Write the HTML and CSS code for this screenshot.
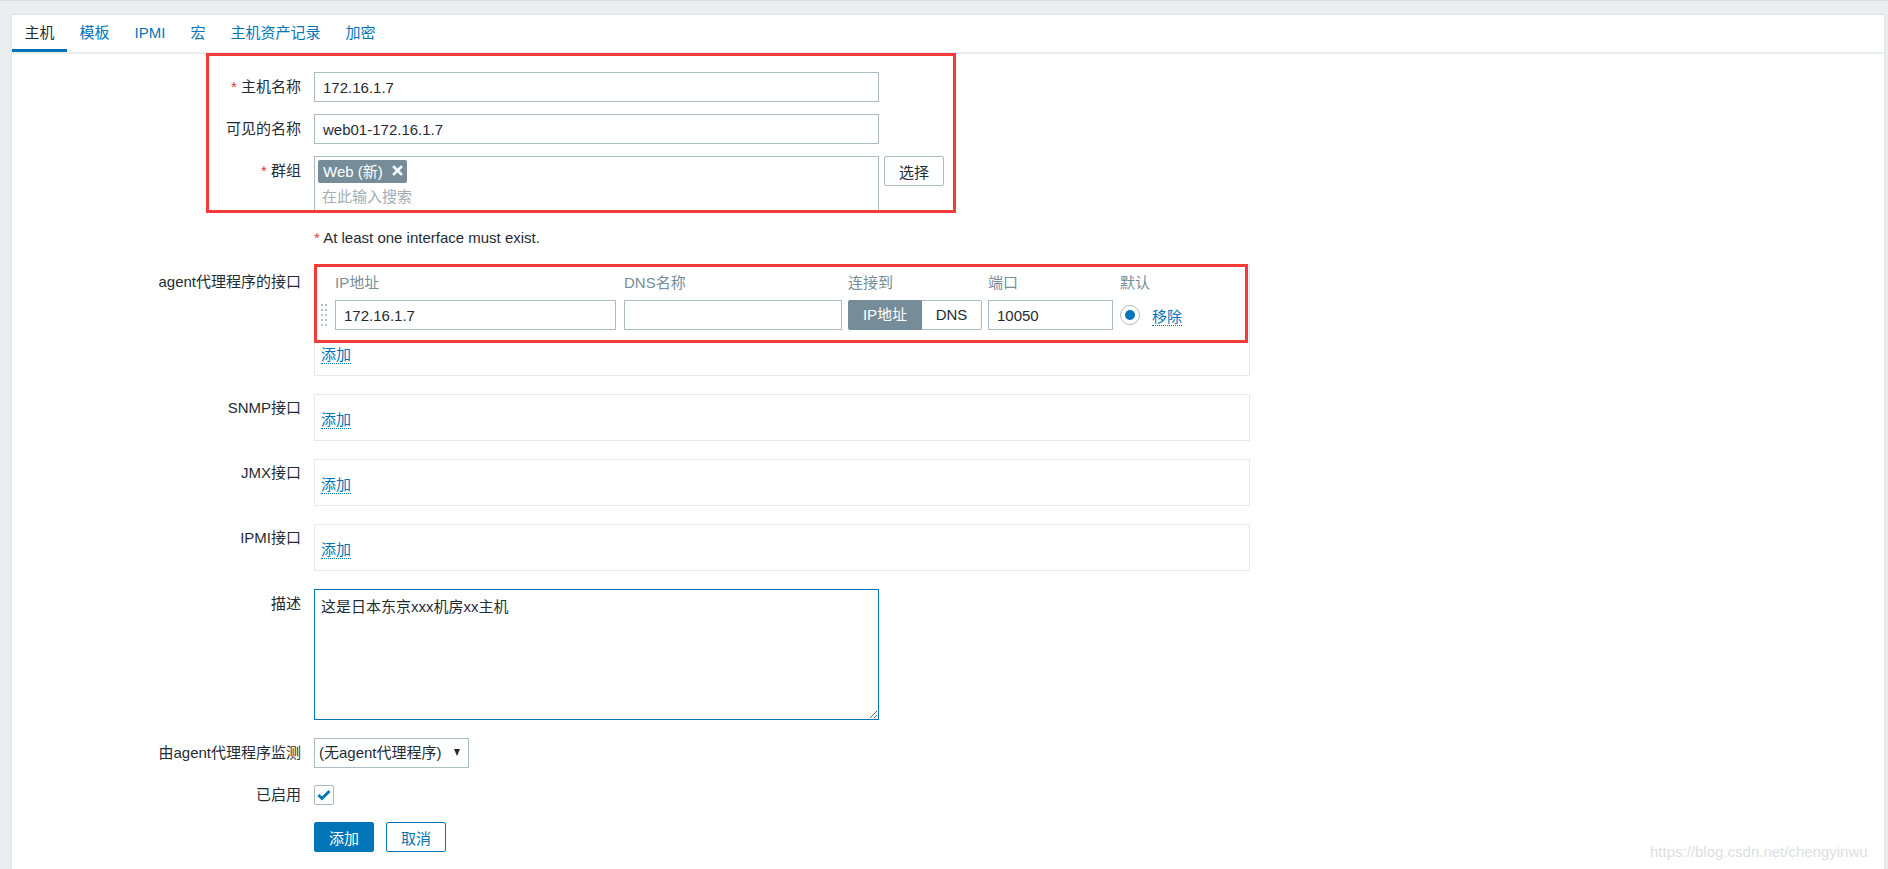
FILE: index.html
```html
<!DOCTYPE html>
<html lang="zh-CN">
<head>
<meta charset="utf-8">
<title>主机</title>
<link rel="stylesheet" href="styles.css">
</head>
<body>
<div class="page">
  <div class="panel">
    <ul class="tabs">
      <li class="tab active"><a>主机</a></li>
      <li class="tab"><a>模板</a></li>
      <li class="tab"><a>IPMI</a></li>
      <li class="tab"><a>宏</a></li>
      <li class="tab"><a>主机资产记录</a></li>
      <li class="tab"><a>加密</a></li>
    </ul>

    <div class="form">
      <div class="row">
        <div class="lbl"><span class="req">*</span> 主机名称</div>
        <div class="fld"><input class="txt w565" type="text" value="172.16.1.7"></div>
      </div>

      <div class="row">
        <div class="lbl">可见的名称</div>
        <div class="fld"><input class="txt w565" type="text" value="web01-172.16.1.7"></div>
      </div>

      <div class="row">
        <div class="lbl"><span class="req">*</span> 群组</div>
        <div class="fld fld-inline">
          <div class="ms">
            <div class="ms-tags">
              <span class="tag">Web (新)
                <svg class="tag-x" width="11" height="11" viewBox="0 0 11 11"><path d="M2 2 L9 9 M9 2 L2 9" stroke="#fff" stroke-width="2.6" stroke-linecap="square"/></svg>
              </span>
            </div>
            <div class="ms-ph">在此输入搜索</div>
          </div>
          <button class="btn-alt" type="button">选择</button>
        </div>
      </div>

      <div class="row">
        <div class="lbl"></div>
        <div class="fld note"><span class="req">*</span> At least one interface must exist.</div>
      </div>

      <div class="row extra">
        <div class="lbl lbl-iface">agent代理程序的接口</div>
        <div class="fld">
          <div class="iface">
            <div class="iface-grid">
              <div class="ih"></div>
              <div class="ih">IP地址</div>
              <div class="ih">DNS名称</div>
              <div class="ih">连接到</div>
              <div class="ih">端口</div>
              <div class="ih">默认</div>

              <div class="ic">
                <svg class="handle" width="6" height="22" viewBox="0 0 6 22">
                  <g fill="#b4c0c6">
                    <rect x="0" y="0" width="2" height="2"/><rect x="4" y="0" width="2" height="2"/>
                    <rect x="0" y="5" width="2" height="2"/><rect x="4" y="5" width="2" height="2"/>
                    <rect x="0" y="10" width="2" height="2"/><rect x="4" y="10" width="2" height="2"/>
                    <rect x="0" y="15" width="2" height="2"/><rect x="4" y="15" width="2" height="2"/>
                    <rect x="0" y="20" width="2" height="2"/><rect x="4" y="20" width="2" height="2"/>
                  </g>
                </svg>
              </div>
              <div class="ic"><input class="txt w281" type="text" value="172.16.1.7"></div>
              <div class="ic"><input class="txt w218" type="text" value=""></div>
              <div class="ic">
                <div class="tog"><span class="tog-on">IP地址</span><span class="tog-off">DNS</span></div>
              </div>
              <div class="ic"><input class="txt w125" type="text" value="10050"></div>
              <div class="ic">
                <span class="radio"><span class="radio-dot"></span></span>
                <a class="lnk rm">移除</a>
              </div>
            </div>
            <div class="iface-add"><a class="lnk">添加</a></div>
          </div>
        </div>
      </div>

      <div class="row extra">
        <div class="lbl lbl-box">SNMP接口</div>
        <div class="fld"><div class="ibox"><a class="lnk">添加</a></div></div>
      </div>

      <div class="row extra">
        <div class="lbl lbl-box">JMX接口</div>
        <div class="fld"><div class="ibox"><a class="lnk">添加</a></div></div>
      </div>

      <div class="row extra">
        <div class="lbl lbl-box">IPMI接口</div>
        <div class="fld"><div class="ibox"><a class="lnk">添加</a></div></div>
      </div>

      <div class="row extra">
        <div class="lbl">描述</div>
        <div class="fld"><textarea class="desc">这是日本东京xxx机房xx主机</textarea></div>
      </div>

      <div class="row">
        <div class="lbl">由agent代理程序监测</div>
        <div class="fld">
          <div class="sel"><span>(无agent代理程序)</span><span class="caret"></span></div>
        </div>
      </div>

      <div class="row">
        <div class="lbl">已启用</div>
        <div class="fld fld-center">
          <span class="chk">
            <svg width="18" height="18" viewBox="0 0 18 18"><path d="M3.5 9 L7 12.5 L14.5 5" fill="none" stroke="#0275b8" stroke-width="3"/></svg>
          </span>
        </div>
      </div>

      <div class="row">
        <div class="lbl"></div>
        <div class="fld fld-inline btns">
          <button class="btn btn-primary" type="button">添加</button>
          <button class="btn btn-secondary" type="button">取消</button>
        </div>
      </div>
    </div>

    <div class="mark mark1"></div>
    <div class="mark mark2"></div>
    <div class="watermark">https://blog.csdn.net/chengyinwu</div>
  </div>
</div>
</body>
</html>
```

FILE: styles.css
```css
html, body {
  margin: 0;
  padding: 0;
}

body {
  height: 869px;
  overflow: hidden;
  background: #ebeef0;
  border-top: 1px solid #d9dee1;
  box-sizing: border-box;
  font-family: "Liberation Sans", Arial, "Noto Sans CJK SC", sans-serif;
  font-size: 15px;
  line-height: 18px;
  color: #1f2c33;
}

.page {
  padding: 13px 3px 0 11px;
}

.panel {
  position: relative;
  background: #fff;
  border: 1px solid #dfe4e7;
  border-bottom: none;
  height: 854px;
  overflow: hidden;
}

/* tabs */
.tabs {
  display: flex;
  list-style: none;
  margin: 0;
  padding: 0;
  border-bottom: 2px solid #ebeef0;
}

.tab a {
  display: block;
  padding: 9px 12.5px 7px;
  line-height: 18px;
  color: #0275b8;
  border-bottom: 3px solid transparent;
  cursor: pointer;
}

.tab.active a {
  color: #1f2c33;
  border-bottom-color: #0275b8;
}

/* form */
.form {
  display: flex;
  flex-direction: column;
  gap: 12px;
  padding-top: 18px;
}

.row {
  display: grid;
  grid-template-columns: 289px 1fr;
  column-gap: 13px;
}

.row.extra {
  margin-bottom: 6px;
}

.lbl {
  text-align: right;
  padding-top: 6px;
  line-height: 18px;
  white-space: nowrap;
}

.lbl-iface {
  padding-top: 9px;
}

.lbl-box {
  padding-top: 5px;
}

.req {
  color: #e33734;
}

.fld-inline {
  display: flex;
  align-items: flex-start;
  gap: 5px;
}

.fld-center {
  display: flex;
  align-items: center;
  height: 30px;
}

.note {
  line-height: 29px;
  height: 29px;
}

.txt {
  display: block;
  height: 30px;
  box-sizing: border-box;
  border: 1px solid #acbbc2;
  padding: 0 8px;
  margin: 0;
  font-family: "Liberation Sans", Arial, "Noto Sans CJK SC", sans-serif;
  font-size: 15px;
  color: #1f2c33;
  background: #fff;
  border-radius: 0;
  outline: none;
}

.w565 { width: 565px; }
.w281 { width: 281px; }
.w218 { width: 218px; }
.w125 { width: 125px; }

/* multiselect */
.ms {
  width: 565px;
  height: 55px;
  box-sizing: border-box;
  border: 1px solid #acbbc2;
  padding: 3px;
}

.ms-tags {
  display: flex;
}

.tag {
  display: inline-flex;
  align-items: center;
  gap: 9px;
  height: 23px;
  line-height: 23px;
  padding: 0 4px 0 5px;
  background: #768d99;
  color: #fff;
  border-radius: 2px;
}

.tag-x {
  display: block;
  margin-top: -2px;
}

.ms-ph {
  color: #a3adb3;
  padding-left: 4px;
  margin-top: 5px;
  line-height: 18px;
}

.btn-alt {
  width: 60px;
  height: 30px;
  border: 1px solid #acbbc2;
  border-radius: 2px;
  background: #fff;
  color: #1f2c33;
  font-family: "Liberation Sans", Arial, "Noto Sans CJK SC", sans-serif;
  font-size: 15px;
  padding: 0;
}

/* interfaces */
.iface {
  width: 936px;
  box-sizing: border-box;
  border: 1px solid #e6e9eb;
}

.iface-grid {
  display: grid;
  grid-template-columns: 20px 289px 224px 140px 132px 1fr;
}

.ih {
  color: #768d99;
  padding: 9px 0 8px;
  line-height: 18px;
}

.ic {
  height: 30px;
  display: flex;
  align-items: center;
}

.handle {
  display: block;
  margin-left: 6px;
}

.tog {
  display: flex;
  width: 134px;
  height: 30px;
  box-sizing: border-box;
}

.tog-on,
.tog-off {
  display: flex;
  align-items: center;
  justify-content: center;
  box-sizing: border-box;
  height: 30px;
}

.tog-on {
  width: 74px;
  background: #768d99;
  color: #fff;
  border: 1px solid #768d99;
  border-radius: 2px 0 0 2px;
}

.tog-off {
  width: 60px;
  background: #fff;
  color: #1f2c33;
  border: 1px solid #acbbc2;
  border-left: none;
  border-radius: 0 2px 2px 0;
}

.radio {
  display: flex;
  align-items: center;
  justify-content: center;
  width: 20px;
  height: 20px;
  box-sizing: border-box;
  border: 1px solid #acbbc2;
  border-radius: 50%;
}

.radio-dot {
  width: 10px;
  height: 10px;
  border-radius: 50%;
  background: #0275b8;
}

.lnk {
  display: inline-block;
  color: #0275b8;
  line-height: 17px;
  border-bottom: 1px dotted #0275b8;
  cursor: pointer;
}

.rm {
  margin-left: 12px;
  margin-top: 3px;
}

.iface-add {
  padding: 16px 6px 11px;
  line-height: 18px;
}

.ibox {
  width: 936px;
  box-sizing: border-box;
  border: 1px solid #e6e9eb;
  padding: 16px 6px 11px;
  line-height: 18px;
}

/* description */
.desc {
  display: block;
  width: 565px;
  height: 131px;
  box-sizing: border-box;
  border: 1px solid #0275b8;
  padding: 8px 6px;
  margin: 0;
  font-family: "Liberation Sans", Arial, "Noto Sans CJK SC", sans-serif;
  font-size: 15px;
  line-height: 18px;
  color: #1f2c33;
  outline: none;
}

/* select */
.sel {
  display: flex;
  align-items: center;
  justify-content: space-between;
  width: 155px;
  height: 30px;
  box-sizing: border-box;
  border: 1px solid #acbbc2;
  padding: 0 8px 0 4px;
  white-space: nowrap;
}

.caret {
  width: 0;
  height: 0;
  border-left: 3.5px solid transparent;
  border-right: 3.5px solid transparent;
  border-top: 7px solid #1f2c33;
  margin-top: -2px;
}

/* checkbox */
.chk {
  display: flex;
  align-items: center;
  justify-content: center;
  width: 20px;
  height: 20px;
  box-sizing: border-box;
  border: 1px solid #acbbc2;
  border-radius: 2px;
}

.chk svg {
  display: block;
}

/* buttons */
.btns {
  gap: 12px;
}

.btn {
  width: 60px;
  height: 30px;
  border-radius: 2px;
  font-family: "Liberation Sans", Arial, "Noto Sans CJK SC", sans-serif;
  font-size: 15px;
  padding: 0;
  cursor: pointer;
}

.btn-primary {
  background: #0275b8;
  border: 1px solid #0275b8;
  color: #fff;
}

.btn-secondary {
  background: #fff;
  border: 1px solid #0275b8;
  color: #0275b8;
}

/* annotations (red highlight boxes drawn over the form) */
.mark {
  position: absolute;
  border: 3px solid #f43b3b;
  box-sizing: border-box;
  pointer-events: none;
}

.mark1 {
  left: 194px;
  top: 38px;
  width: 750px;
  height: 160px;
}

.mark2 {
  left: 302px;
  top: 249px;
  width: 934px;
  height: 79px;
}

.watermark {
  position: absolute;
  left: 1638px;
  top: 828px;
  color: #dcdfe1;
  font-size: 15px;
  line-height: 18px;
  white-space: nowrap;
}
```
